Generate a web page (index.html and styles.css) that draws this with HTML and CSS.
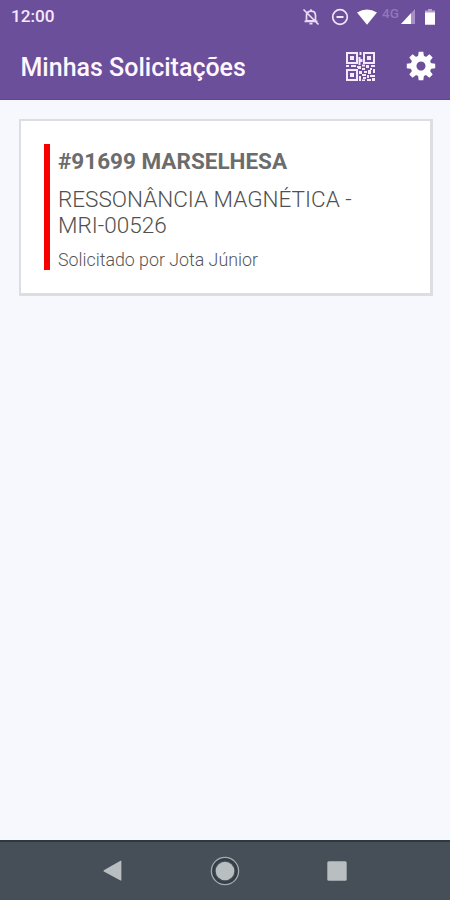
FILE: index.html
```html
<!DOCTYPE html>
<html lang="pt-BR">
<head>
<meta charset="utf-8">
<title>Minhas Solicitações</title>
<link rel="stylesheet" href="styles.css">
</head>
<body>
<div class="screen">
  <header class="top">
    <div class="status">
      <span class="clock">12:00</span>
      <div class="status-icons">
        <svg class="bell" width="18" height="18" viewBox="0 0 18 18" fill="none" stroke="#eadcf5" stroke-width="1.7"><path d="M4.500 7v5.800h9V7.500C13.500 4.800 11.500 3.200 9 3.200S4.500 4.800 4.500 7zM2.500 13.300h13M9 1.300v2M7.500 15.700h3M1.500 1.500l15 15"/></svg>
        <svg class="dnd" width="18" height="18" viewBox="0 0 18 18" fill="none" stroke="#efe4f8"><circle cx="9" cy="9" r="7.300" stroke-width="1.700"/><path d="M5.500 9h7" stroke-width="2"/></svg>
        <svg class="wifi" width="20" height="16" viewBox="0 0 20 16"><path d="M0 3.600Q10-2.500 20 3.600L10 15.800z" fill="#fff"/></svg>
        <span class="net">4G</span>
        <svg class="signal" width="14" height="15" viewBox="0 0 14 15"><path d="M14 0v15H0z" fill="#a88fc7"/><path d="M10 4.300V15H0z" fill="#fff"/></svg>
        <svg class="battery" width="10" height="16" viewBox="0 0 10 16"><path d="M3 0h4v1.500h3V16H0V1.500h3z" fill="#b59dcc"/><path d="M0 3.500h10V15.500H0z" fill="#fff"/></svg>
      </div>
    </div>
    <div class="bar">
      <h1>Minhas Solicitações</h1>
      <svg class="qr" width="29" height="29" viewBox="0 0 29 29" fill="#f5e8fa"><path fill-rule="evenodd" d="M0 0h12v12H0zM2 2v8h8V2zM4 4h4v4H4zM17 0h12v12H17zM19 2v8h8V2zM21 4h4v4h-4zM0 17h12v12H0zM2 19v8h8v-8zM4 21h4v4H4z"/><path d="M13.500 0h2v3h-2zM12.500 5h2v2h2v3h-2v3h-2zM0 13h3v2H0zM5 13h5v2H5zM11 14h4v3h-3v-1h-1zM16 12.500h3v2h-3zM20 13h3v3h-3zM25 13h4v2h-4zM16 16h3v2h-3zM24 16h2v2h-2zM27 17h2v4h-2zM13 19h3v3h-3zM18 19h3v2h-3zM22 18h3v4h-3zM16 22h4v2h-4zM13 24h2v5h-2zM21 23h2v3h-2zM24 23h5v2h-5zM17 25h3v2h-3zM16 27.500h3V29h-3zM21 27h4v2h-4zM26 26h3v3h-3z"/></svg>
      <svg class="gear" width="30" height="30" viewBox="-15 -15 30 30" fill="#fff"><path fill-rule="evenodd" d="M0-10.400a10.400 10.400 0 1 0 .01 0zM0-4.500a4.500 4.500 0 1 1-.01 0z"/><g id="teeth"><path id="tooth" d="M-3-9l.7-5.200h4.600l.7 5.200z"/><use href="#tooth" transform="rotate(45)"/><use href="#tooth" transform="rotate(90)"/><use href="#tooth" transform="rotate(135)"/></g><use href="#teeth" transform="rotate(180)"/></svg>
    </div>
  </header>
  <main>
    <article class="card">
      <div class="request">
        <h2>#91699 MARSELHESA</h2>
        <p class="exam">RESSONÂNCIA MAGNÉTICA -<br>MRI-00526</p>
        <p class="by">Solicitado por Jota Júnior</p>
      </div>
    </article>
  </main>
  <nav>
    <svg width="19" height="22" viewBox="0 0 19 22"><path d="M.8 10.200L17.500.8q.9-.3.900.7v18.400q0 .9-.9.500L.8 11.500q-.7-.6 0-1.300z" fill="#b9bec1"/></svg>
    <svg width="30" height="30" viewBox="0 0 30 30"><circle cx="15" cy="15" r="12" fill="none" stroke="#343e46" stroke-width="3"/><circle cx="15" cy="15" r="13.600" fill="none" stroke="#a5abaf" stroke-width="1.300"/><circle cx="15" cy="15" r="9.300" fill="#b9bec1"/></svg>
    <svg width="20" height="20" viewBox="0 0 20 20"><rect x=".3" y=".3" width="19.400" height="19.400" rx="1.500" fill="#b9bec1"/></svg>
  </nav>
</div>
</body>
</html>
```
FILE: styles.css
```css
* { box-sizing: border-box; }
body, h1, h2, p { margin: 0; }
body { font-family: Roboto, "Liberation Sans", sans-serif; }
svg { display: block; flex: none; }
.screen { width: 450px; height: 900px; display: flex; flex-direction: column; background: #f6f8fd; }
.top { height: 100px; background: #6c4f9b; color: #fff; border-bottom: 1px solid #5f4790; }
.status { height: 33px; display: flex; align-items: center; justify-content: space-between; padding: 0 15px 0 11px; }
.clock { font-size: 17.200px; font-weight: 500; line-height: 33px; color: #f5e9fb; }
.status-icons { display: flex; align-items: center; }
.dnd { margin-left: 11px; }
.wifi { margin-left: 8px; }
.net { width: 18px; margin-left: 5px; font-size: 13.500px; line-height: 14px; margin-top: -7px; color: #9278b7; font-weight: 500; }
.signal { margin-left: 1px; }
.battery { margin-left: 10px; }
.bar { height: 66px; display: flex; align-items: center; padding: 0 14.500px 0 20.500px; }
h1 { flex: 1; font-size: 25px; font-weight: 500; line-height: 30px; padding-top: 3px; white-space: nowrap; color: #fff6ff; }
.gear { margin-left: 30.500px; }
main { flex: 1; padding: 19px 17px 0 19px; }
.card { height: 177px; border: 2px solid #dcdee1; border-right-width: 3px; border-bottom-width: 3px; background: #fff; padding: 23px; }
.request { height: 126px; border-left: 6px solid #f80000; padding: 4px 0 0 8px; white-space: nowrap; }
h2 { font-size: 22.500px; line-height: 26px; font-weight: 700; color: #6c6c6c; }
.exam { margin-top: 12px; font-size: 22.500px; line-height: 26px; font-weight: 300; color: #505050; }
.by { margin-top: 11px; font-size: 17.800px; line-height: 22px; font-weight: 300; color: #555; }
nav { height: 60px; background: #464e57; border-top: 2px solid #2f3840; display: flex; align-items: center; padding: 0 103px; justify-content: space-between; }
```
